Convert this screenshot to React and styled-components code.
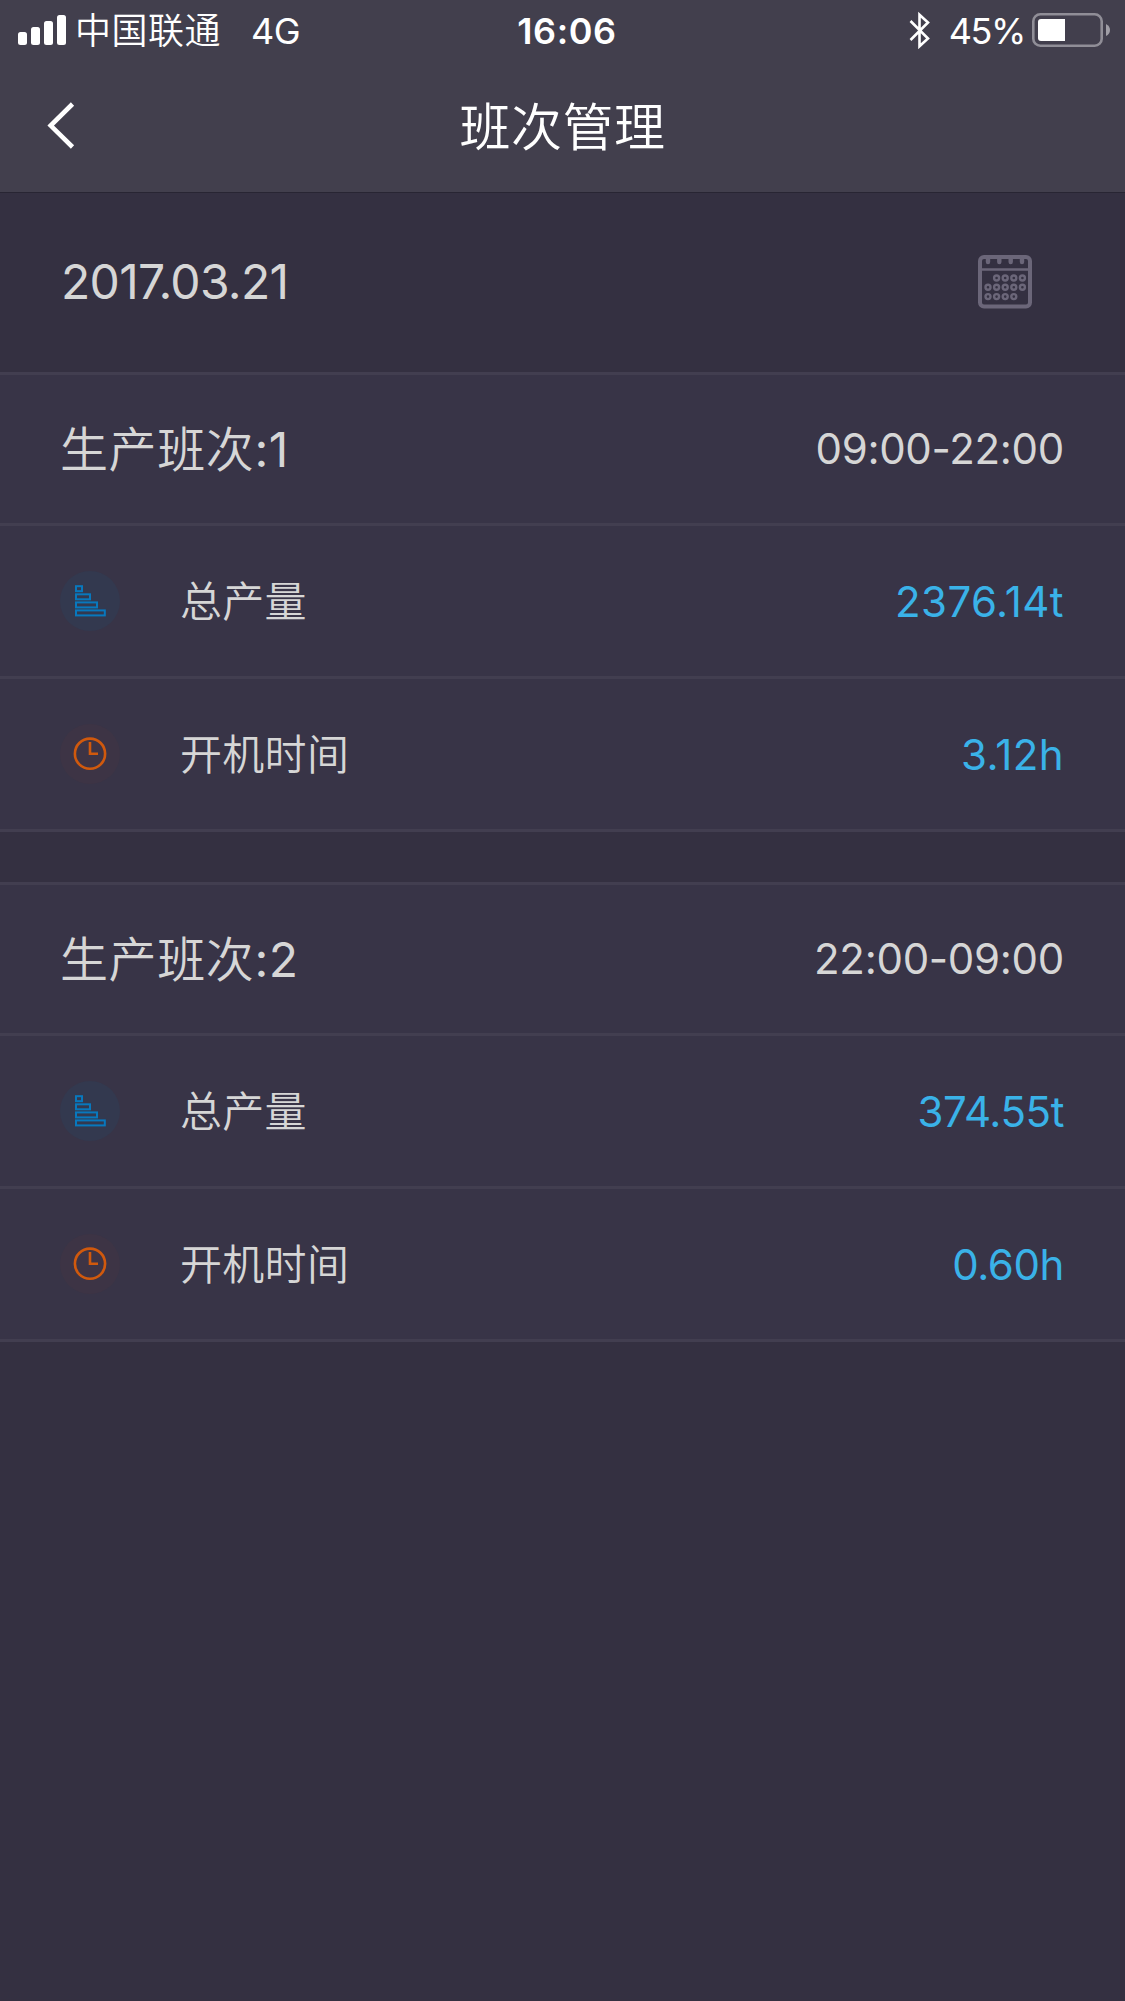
import React from 'react'
import styled, { createGlobalStyle } from 'styled-components'

const GlobalStyle = createGlobalStyle`
  body {
    margin: 0;
    background-color: #343041;
    font-family: Inter, 'Noto Sans CJK SC', sans-serif;
    font-weight: 400;
  }
  * {
    box-sizing: border-box;
  }
`
const Main = styled.div`
  width: 100%;
  min-height: 2001px;
  background-color: #343041;
  color: #d6d6d6;
`
const Header = styled.header`
  height: 193px;
  background-color: #423f4d;
  color: #ffffff;
  border-bottom: 1px solid #282533;
`
const StatusBar = styled.div`
  display: grid;
  grid-template-columns: 1fr auto 1fr;
  align-items: center;
  height: 60px;
  padding: 0 14px 0 18px;
  font-size: 36px;
  line-height: 58px;
`
const StatusSide = styled.div`
  display: flex;
  align-items: center;
  justify-content: ${(props) => (props.$end ? 'flex-end' : 'flex-start')};
`
const StatusText = styled.span`
  padding-top: 2px;
`
const Carrier = styled(StatusText)`
  margin-left: 8px;
  font-weight: 350;
  letter-spacing: 0.5px;
`
const Network = styled(StatusText)`
  margin-left: 30px;
  letter-spacing: -0.6px;
`
const Clock = styled(StatusText)`
  padding-left: 5px;
  font-weight: 600;
  letter-spacing: 0.6px;
`
const Percent = styled(StatusText)`
  margin: 0 7px 0 18px;
  letter-spacing: -1.4px;
`
const NavBar = styled.nav`
  display: grid;
  grid-template-columns: 1fr auto 1fr;
  align-items: center;
  height: 128px;
  margin-top: 2px;
`
const BackButton = styled.button`
  display: flex;
  justify-self: start;
  padding: 0 0 0 47px;
  border: none;
  background: none;
`
const Title = styled.h1`
  margin: 0;
  padding-top: 4px;
  font-size: 51px;
  line-height: 124px;
  font-weight: 350;
  letter-spacing: 0.5px;
`
const DateRow = styled.div`
  display: flex;
  align-items: center;
  justify-content: space-between;
  height: 179px;
  padding: 0 92px 2px 61px;
  font-size: 48px;
  line-height: 60px;
  letter-spacing: -0.7px;
`
const Shift = styled.section`
  border-top: 3px solid #423e50;
  margin-bottom: 50px;
  background-color: #383447;
`
const Row = styled.div`
  display: flex;
  align-items: center;
  height: ${(props) => (props.$head ? '151px' : '153px')};
  padding: 0 61px 0 60px;
  border-bottom: 3px solid #423e50;
  font-size: 42px;
  line-height: 60px;
`
const ShiftName = styled.h2`
  margin: 0;
  padding-top: 1px;
  flex: 1;
  font-size: 48px;
  font-weight: 350;
  letter-spacing: 0.6px;
`
const ShiftNumber = styled.span`
  font-weight: 400;
`
const Badge = styled.div`
  display: flex;
  width: 60px;
  height: 60px;
  margin-right: 60px;
  border-radius: 50%;
  background-color: ${(props) => props.$color};
`
const Label = styled.span`
  flex: 1;
  padding-top: 1px;
  font-weight: 350;
  letter-spacing: 0.3px;
`
const Time = styled.span`
  letter-spacing: -0.3px;
`
// the digit 1 is narrow, so values that hold it get a little more room
const Value = styled.span`
  padding-top: 1px;
  color: #3ab2e8;
  letter-spacing: ${(props) => (props.$loose ? '0.4px' : '-0.4px')};
`

const SignalIcon = () => (
  <svg width="49" height="32" viewBox="0 0 49 32" fill="#fff">
    <rect x="0" y="18" width="9" height="13" rx="2.5" />
    <rect x="13" y="13" width="9" height="18" rx="2.5" />
    <rect x="26" y="7" width="9" height="24" rx="2.5" />
    <rect x="39" y="1" width="9" height="30" rx="2.5" />
  </svg>
)

const BluetoothIcon = () => (
  <svg width="22" height="38" viewBox="0 0 22 38" fill="none" stroke="#fff" strokeWidth="2.6">
    <path d="M1.5 10 L19 27.5 L10.5 35.3 V3.7 L19 11.5 L1.5 29" />
  </svg>
)

const BatteryIcon = () => (
  <svg width="79" height="34" viewBox="0 0 79 34">
    <rect x="1.3" y="1.3" width="68.4" height="31.4" rx="7" fill="none" stroke="#908e97" strokeWidth="2.6" />
    <path d="M9 6 H33 V28 H9 Q6 28 6 25 V9 Q6 6 9 6 Z" fill="#fff" />
    <path d="M74 11 Q78 13 78 17 Q78 21 74 23 Z" fill="#a09ea6" />
  </svg>
)

const BackIcon = () => (
  <svg width="28" height="48" viewBox="0 0 28 48" fill="none" stroke="#fff" strokeWidth="4.6">
    <path d="M25.5 2 L3.7 23.6 L25.5 45" />
  </svg>
)

const days = [
  [1, 2, 3, 4],
  [0, 1, 2, 3, 4],
  [0, 1, 2, 3],
]

const CalendarIcon = () => (
  <svg width="55" height="54" viewBox="0 0 55 54" fill="none" stroke="#6b6679">
    <rect x="2" y="2" width="50" height="49.5" rx="4" strokeWidth="4" />
    <path d="M3 14.5 H52" strokeWidth="2.6" />
    <path d="M10 3 V7 M21.3 3 V7 M32.7 3 V7 M44 3 V7" strokeWidth="4.4" strokeLinecap="round" />
    {days.map((row, y) =>
      row.map((x) => (
        <circle key={`${x}-${y}`} cx={10 + x * 8.6} cy={23 + y * 9.3} r="2.5" strokeWidth="2.4" />
      ))
    )}
  </svg>
)

const OutputIcon = () => (
  <svg width="60" height="60" viewBox="0 0 60 60" fill="none" stroke="#0878bd" strokeWidth="2">
    <rect x="16" y="15.2" width="6" height="5" />
    <rect x="16" y="23.3" width="14" height="5" />
    <rect x="16" y="31.4" width="21" height="5" />
    <rect x="16" y="39.4" width="28.8" height="5" />
  </svg>
)

const ClockIcon = () => (
  <svg width="60" height="60" viewBox="0 0 60 60" fill="none" stroke="#d0590d" strokeWidth="2.6">
    <circle cx="30" cy="29.7" r="15.1" />
    <path d="M30 18 V29.7 H38" />
  </svg>
)

const shifts = [
  { id: 1, time: '09:00-22:00', output: '2376.14t', hours: '3.12h' },
  { id: 2, time: '22:00-09:00', output: '374.55t', hours: '0.60h' },
]

export default function App() {
  return (
    <Main>
      <GlobalStyle />
      <Header>
        <StatusBar>
          <StatusSide>
            <SignalIcon />
            <Carrier>中国联通</Carrier>
            <Network>4G</Network>
          </StatusSide>
          <Clock>16:06</Clock>
          <StatusSide $end>
            <BluetoothIcon />
            <Percent>45%</Percent>
            <BatteryIcon />
          </StatusSide>
        </StatusBar>
        <NavBar>
          <BackButton aria-label="返回">
            <BackIcon />
          </BackButton>
          <Title>班次管理</Title>
        </NavBar>
      </Header>
      <DateRow>
        <span>2017.03.21</span>
        <CalendarIcon />
      </DateRow>
      {shifts.map((shift) => (
        <Shift key={shift.id}>
          <Row $head>
            <ShiftName>
              生产班次<ShiftNumber>:{shift.id}</ShiftNumber>
            </ShiftName>
            <Time>{shift.time}</Time>
          </Row>
          <Row>
            <Badge $color="#33394f">
              <OutputIcon />
            </Badge>
            <Label>总产量</Label>
            <Value $loose={shift.output.includes('1')}>{shift.output}</Value>
          </Row>
          <Row>
            <Badge $color="#3d3445">
              <ClockIcon />
            </Badge>
            <Label>开机时间</Label>
            <Value $loose={shift.hours.includes('1')}>{shift.hours}</Value>
          </Row>
        </Shift>
      ))}
    </Main>
  )
}
